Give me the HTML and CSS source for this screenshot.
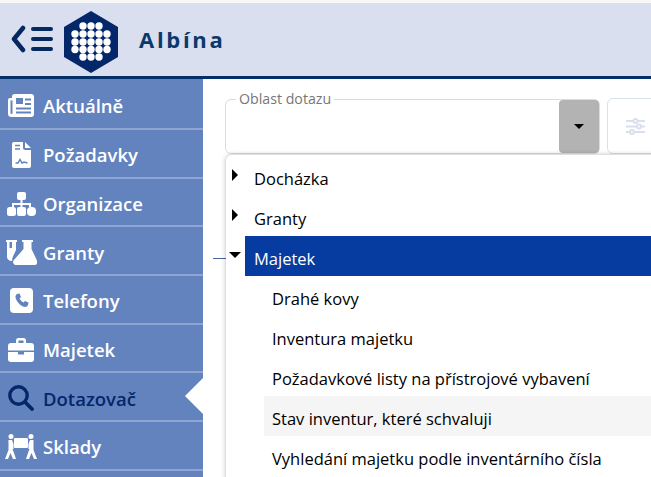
FILE: index.html
```html
<!DOCTYPE html>
<html lang="en">
<head>
    <meta charset="UTF-8">
    <meta name="viewport" content="width=device-width, initial-scale=1.0">
    <title>Albína</title>
    <link rel="stylesheet" href="styles.css">
</head>

<body>
    <div class="header">
        <svg class="menu-toggle" width="42" height="28" viewBox="0 0 42 28">
            <path d="M12 3 L3 14 L12 25" fill="none" stroke="#04285f" stroke-width="4.5" stroke-linecap="round" stroke-linejoin="round"/>
            <path d="M22 4 H40 M22 14 H40 M22 24 H40" fill="none" stroke="#04285f" stroke-width="4" stroke-linecap="round"/>
        </svg>
        <svg class="logo" width="56" height="62" viewBox="0 0 56 62" fill="#fff">
            <path d="M28 0 L55 16 V46 L28 62 L1 46 V16 Z" fill="#04276a"/>
            <circle cx="20" cy="15" r="3.7"/><circle cx="28" cy="15" r="3.7"/><circle cx="36" cy="15" r="3.7"/>
            <circle cx="12" cy="23" r="3.7"/><circle cx="20" cy="23" r="3.7"/><circle cx="28" cy="23" r="3.7"/><circle cx="36" cy="23" r="3.7"/><circle cx="44" cy="23" r="3.7"/>
            <circle cx="12" cy="31" r="3.7"/><circle cx="20" cy="31" r="3.7"/><circle cx="28" cy="31" r="3.7"/><circle cx="36" cy="31" r="3.7"/><circle cx="44" cy="31" r="3.7"/>
            <circle cx="12" cy="38.500" r="3.7"/><circle cx="20" cy="38.500" r="3.7"/><circle cx="28" cy="38.500" r="3.7"/><circle cx="36" cy="38.500" r="3.7"/><circle cx="44" cy="38.500" r="3.7"/>
            <circle cx="20" cy="46" r="3.7"/><circle cx="28" cy="46" r="3.7"/><circle cx="36" cy="46" r="3.7"/>
        </svg>
        <span class="app-name">Albína</span>
    </div>

    <div class="main">
        <div class="sidebar">
            <a class="nav-item">
                <span class="nav-icon">
                    <svg width="26" height="23" viewBox="0 0 26 23" fill="#fff">
                        <path d="M4 2.500 A2.500 2.500 0 0 1 6.500 0 H23 A3 3 0 0 1 26 3 V20 A3 3 0 0 1 23 23 H3.500 A3.500 3.500 0 0 1 0 19.500 V6 A2 2 0 0 1 2 4 H4 Z M2.500 6.500 V19 A1 1 0 0 0 4.500 19 V6.500 Z M8 4 V10 H15 V4 Z M17 4.500 V6.500 H23 V4.500 Z M17 9 V11 H23 V9 Z M8 13.500 V15.500 H23 V13.500 Z M8 17.500 V19.500 H23 V17.500 Z" fill-rule="evenodd"/>
                    </svg>
                </span>
                Aktuálně
            </a>
            <a class="nav-item">
                <span class="nav-icon">
                    <svg width="19" height="26" viewBox="0 0 19 26" fill="#fff">
                        <path d="M2 0 H11 V6 A2 2 0 0 0 13 8 H19 V24 A2 2 0 0 1 17 26 H2 A2 2 0 0 1 0 24 V2 A2 2 0 0 1 2 0 Z M13 0 L19 6 H13 Z"/>
                        <path d="M3 3.500 H8 M3 7 H8 M3.500 21 H6 L8 17.500 L10 21 L12 20 L15.500 21" fill="none" stroke="#6383bf" stroke-width="1.500"/>
                    </svg>
                </span>
                Požadavky
            </a>
            <a class="nav-item">
                <span class="nav-icon">
                    <svg width="29" height="24" viewBox="0 0 29 24" fill="#fff">
                        <rect x="10" y="0" width="9" height="8" rx="2"/>
                        <path d="M13.500 8 H15.500 V11 H24 V15 H22 V13 H15.500 V15 H13.500 V13 H7 V15 H5 V11 H13.500 Z"/>
                        <rect x="0" y="15" width="9" height="9" rx="2.500"/>
                        <rect x="10" y="15" width="9" height="9" rx="2"/>
                        <rect x="20" y="15" width="9" height="9" rx="4"/>
                    </svg>
                </span>
                Organizace
            </a>
            <a class="nav-item">
                <span class="nav-icon">
                    <svg width="31" height="25" viewBox="0 0 31 25" fill="#fff">
                        <path d="M0 0 H11 V2 H10 V10 L6.500 17.500 L6 21 A4.500 4.500 0 0 1 1 17 V2 H0 Z M3.500 2 V8 H6 V2 Z" fill-rule="evenodd"/>
                        <path d="M16 0 H27 V2 H25.500 V9 L31 20.500 A3 3 0 0 1 28 25 H10 A3 3 0 0 1 7.500 20.500 L17.500 9 V2 H16 Z"/>
                    </svg>
                </span>
                Granty
            </a>
            <a class="nav-item">
                <span class="nav-icon">
                    <svg width="23" height="25" viewBox="0 0 23 25">
                        <rect width="23" height="25" rx="4" fill="#fff"/>
                        <path d="M7 6 L9.500 5.500 L11 9 L9.500 10.500 A9 9 0 0 0 13.500 14.500 L15 13 L18.500 14.500 L18 17 C17.500 19 15 19.500 13 18.500 A14 14 0 0 1 6 11 C5 9 5.500 6.500 7 6 Z" fill="#6383bf"/>
                    </svg>
                </span>
                Telefony
            </a>
            <a class="nav-item">
                <span class="nav-icon">
                    <svg width="26" height="24" viewBox="0 0 26 24" fill="#fff">
                        <path d="M8 5 V2.500 A2.500 2.500 0 0 1 10.500 0 H15.500 A2.500 2.500 0 0 1 18 2.500 V5 H23 A3 3 0 0 1 26 8 V12.500 H0 V8 A3 3 0 0 1 3 5 Z M10.500 2.500 V5 H15.500 V2.500 Z" fill-rule="evenodd"/>
                        <path d="M0 14 H10 V16.500 H16 V14 H26 V21 A3 3 0 0 1 23 24 H3 A3 3 0 0 1 0 21 Z"/>
                    </svg>
                </span>
                Majetek
            </a>
            <a class="nav-item nav-item-active">
                <span class="nav-icon">
                    <svg width="26" height="26" viewBox="0 0 26 26" fill="none" stroke="#04276a">
                        <circle cx="10.500" cy="10.500" r="8.700" stroke-width="3.400"/>
                        <path d="M17 17 L24 24" stroke-width="3.800" stroke-linecap="round"/>
                    </svg>
                </span>
                Dotazovač
            </a>
            <a class="nav-item">
                <span class="nav-icon">
                    <svg width="32" height="25" viewBox="0 0 32 25" fill="#fff">
                        <circle cx="6" cy="2.500" r="2.500"/>
                        <circle cx="26" cy="2.500" r="2.500"/>
                        <rect x="9" y="4" width="14" height="10" rx="1"/>
                        <path d="M3.500 6 H7 L8.500 10 V15 H7.500 L9 19 L11 25 H8 L5.500 19 L3 25 H0 L3.500 16 Z"/>
                        <path d="M28.500 6 H25 L23.500 10 V15 H24.500 L23 19 L21 25 H24 L26.500 19 L29 25 H32 L28.500 16 Z"/>
                    </svg>
                </span>
                Sklady
            </a>
        </div>

        <div class="content">
            <div class="query-bar">
                <div class="field">
                    <span class="field-label">Oblast dotazu</span>
                    <button class="field-button"><span class="caret-down"></span></button>
                </div>
                <button class="filter-button">
                    <svg width="19" height="17" viewBox="0 0 19 17" fill="none" stroke="#d9dfee" stroke-width="2">
                        <path d="M0 3 H19 M0 8.500 H19 M0 14 H19"/>
                        <circle cx="9.500" cy="3" r="2" fill="#fff"/>
                        <circle cx="13" cy="8.500" r="2" fill="#fff"/>
                        <circle cx="6" cy="14" r="2" fill="#fff"/>
                    </svg>
                </button>
            </div>
            <div class="stray-line"></div>

            <div class="tree">
                <div class="tree-row"><span class="caret-right"></span>Docházka</div>
                <div class="tree-row"><span class="caret-right"></span>Granty</div>
                <div class="tree-row tree-row-open"><span class="caret-open"></span><span class="tree-label">Majetek</span></div>
                <div class="tree-child">Drahé kovy</div>
                <div class="tree-child">Inventura majetku</div>
                <div class="tree-child">Požadavkové listy na přístrojové vybavení</div>
                <div class="tree-child tree-child-hover">Stav inventur, které schvaluji</div>
                <div class="tree-child">Vyhledání majetku podle inventárního čísla</div>
            </div>
        </div>
    </div>
</body>
</html>
```

FILE: styles.css
```css
* {
    box-sizing: border-box;
}

html, body {
    height: 100%;
}

body {
    margin: 0;
    padding-top: 3px;
    background-color: #f7f7f7;
    font-family: "Open Sans", "Noto Sans", sans-serif;
    display: flex;
    flex-direction: column;
    overflow: hidden;
}

.header {
    height: 76px;
    flex-shrink: 0;
    display: flex;
    align-items: center;
    padding-left: 11px;
    background-color: #d9dfee;
    border-bottom: 3px solid #04306a;
}

.menu-toggle {
    margin-top: -1px;
}

.logo {
    margin-left: 10px;
    margin-top: 5px;
}

.app-name {
    margin-left: 20px;
    margin-top: -1px;
    font-size: 22px;
    font-weight: 700;
    letter-spacing: 2.7px;
    color: #0a3a6b;
}

.main {
    flex: 1;
    display: flex;
    min-height: 0;
}

.sidebar {
    width: 203px;
    flex-shrink: 0;
    background-color: #6383bf;
    position: relative;
}

.nav-item {
    height: 48.7px;
    display: flex;
    align-items: center;
    padding-top: 3px;
    font-size: 18.5px;
    font-weight: 600;
    color: #fff;
    border-bottom: 2px solid #8ea5d2;
    position: relative;
}

.nav-item:first-child {
    height: 51px;
}

.nav-icon {
    width: 43px;
    flex-shrink: 0;
    display: flex;
    justify-content: center;
    padding-right: 1px;
}

.nav-item-active {
    color: #04276a;
}

.nav-item-active::after {
    content: "";
    position: absolute;
    right: 0;
    top: 5px;
    border-style: solid;
    border-width: 18.500px 18px 18.500px 0;
    border-color: transparent #fff transparent transparent;
}

.content {
    flex: 1;
    min-width: 0;
    position: relative;
    background-color: #fff;
}

.query-bar {
    display: flex;
    gap: 7px;
    padding: 20px 0 0 22px;
}

.field {
    width: 375px;
    height: 55px;
    position: relative;
    border: 1px solid #dcdcdc;
    border-radius: 6px;
    flex-shrink: 0;
}

.field-label {
    position: absolute;
    left: 10px;
    top: -9px;
    padding: 0 3px;
    background-color: #fff;
    font-size: 14.2px;
    line-height: 16px;
    color: #777;
}

.field-button {
    position: absolute;
    right: 0;
    top: 0;
    width: 40px;
    height: 53px;
    padding: 0;
    border: none;
    border-radius: 4px;
    background-color: #b3b3b3;
    display: flex;
    align-items: center;
    justify-content: center;
}

.caret-down {
    border-style: solid;
    border-width: 5px 5px 0 5px;
    border-color: #000 transparent transparent transparent;
}

.filter-button {
    width: 60px;
    height: 56px;
    margin-top: -1px;
    flex-shrink: 0;
    padding: 0 0 0 18px;
    border: 1px solid #d9dfee;
    border-radius: 6px;
    background-color: #fff;
    display: flex;
    align-items: center;
    justify-content: flex-start;
}

.stray-line {
    position: absolute;
    left: 10px;
    top: 179px;
    width: 14px;
    height: 1px;
    background-color: #46659f;
}

/* dropdown tree lies over the page */
.tree {
    position: absolute;
    left: 23px;
    top: 76px;
    width: 430px;
    height: 330px;
    padding-top: 1px;
    background-color: #fff;
    border-radius: 6px 0 0 0;
    box-shadow: 0 0 5px rgba(0, 0, 0, 0.3);
    font-size: 16.5px;
    color: #000;
}

.tree-row {
    height: 40px;
    display: flex;
    align-items: center;
    padding: 4px 0 0 28px;
    position: relative;
}

.tree-row-open {
    padding: 0 0 0 19px;
}

.tree-label {
    flex: 1;
    align-self: stretch;
    display: flex;
    align-items: center;
    padding: 4px 0 0 9px;
    background-color: #063ca0;
    color: #fff;
}

.caret-right {
    position: absolute;
    left: 6px;
    top: 13px;
    border-style: solid;
    border-width: 6px 0 6px 6px;
    border-color: transparent transparent transparent #000;
}

.caret-open {
    position: absolute;
    left: 3px;
    top: 16px;
    border-style: solid;
    border-width: 6px 6px 0 6px;
    border-color: #000 transparent transparent transparent;
}

.tree-child {
    height: 40px;
    display: flex;
    align-items: center;
    margin-left: 38px;
    padding: 4px 0 0 8px;
}

.tree-child-hover {
    background-color: #f5f5f5;
}
```
